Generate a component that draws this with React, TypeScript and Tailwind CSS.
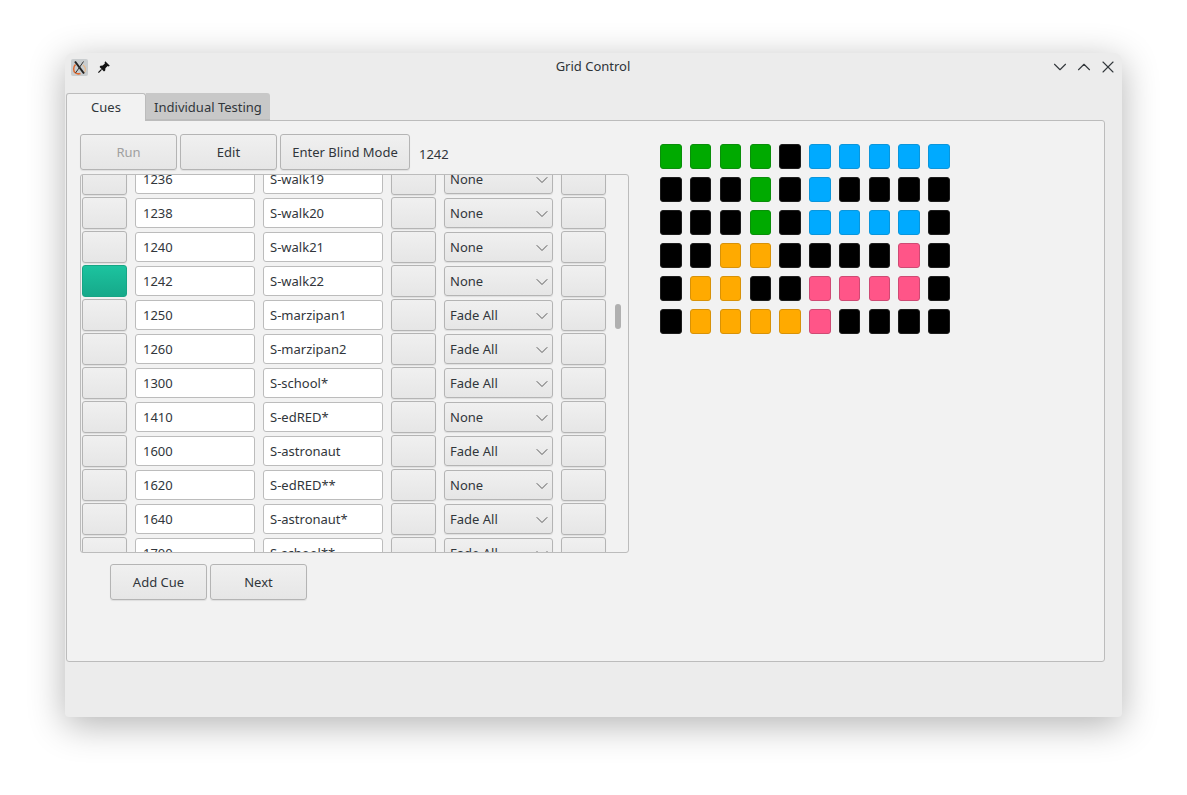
import { ChevronDown, ChevronUp, X } from "lucide-react";

// Cue rows of the table, top one is cut off by the scroll area
const ROWS: { id: string; name: string; fade: string; active?: boolean }[] = [
  { id: "1236", name: "S-walk19", fade: "None" },
  { id: "1238", name: "S-walk20", fade: "None" },
  { id: "1240", name: "S-walk21", fade: "None" },
  { id: "1242", name: "S-walk22", fade: "None", active: true },
  { id: "1250", name: "S-marzipan1", fade: "Fade All" },
  { id: "1260", name: "S-marzipan2", fade: "Fade All" },
  { id: "1300", name: "S-school*", fade: "Fade All" },
  { id: "1410", name: "S-edRED*", fade: "None" },
  { id: "1600", name: "S-astronaut", fade: "Fade All" },
  { id: "1620", name: "S-edRED**", fade: "None" },
  { id: "1640", name: "S-astronaut*", fade: "Fade All" },
  { id: "1700", name: "S-school**", fade: "Fade All" },
];

const GRID = [
  "GGGGKBBBBB",
  "KKKGKBKKKK",
  "KKKGKBBBBK",
  "KKOOKKKKPK",
  "KOOKKPPPPK",
  "KOOOOPKKKK",
];

const CELL: Record<string, string> = {
  G: "bg-[#00aa00] border-[#0a8f0a]",
  K: "bg-black border-[#1c1c1c]",
  B: "bg-[#00aaff] border-[#0a96dc]",
  O: "bg-[#ffaa00] border-[#d89208]",
  P: "bg-[#ff5588] border-[#cf4a74]",
};

const BTN =
  "rounded-[3px] border border-[#b4b4b4] bg-gradient-to-b from-[#f0f0f0] to-[#e6e6e6] shadow-[0_1px_1px_rgba(0,0,0,0.08)]";

function PushButton({ label, w, disabled }: { label: string; w: string; disabled?: boolean }) {
  return (
    <button
      className={`${BTN} ${w} h-9 pt-[2px] text-[13px] ${disabled ? "text-[#a0a0a0]" : "text-[#31363b]"}`}
    >
      {label}
    </button>
  );
}

function XLogo() {
  return (
    <div className="w-[17px] h-[17px] rounded-[2px] bg-[#c9cdcf]">
      <svg viewBox="0 0 17 17" className="w-[17px] h-[17px]">
        <path d="M4.5 5.5C2 8 2 12 4.5 14c1.5 1 3.5 1 5 .5" stroke="#e0672c" strokeWidth="1.5" fill="none" />
        <path d="M12 6c2.5 2 3 5 1.5 7.5" stroke="#e8b98c" strokeWidth="1.2" fill="none" />
        <path d="M4 2.5 13 14.5" stroke="#222" strokeWidth="2" fill="none" />
        <path d="M12.5 2.5 4.5 14" stroke="#333" strokeWidth="1" fill="none" />
      </svg>
    </div>
  );
}

// solid window-pin glyph, head up-right and point down-left
function PinIcon() {
  return (
    <svg viewBox="0 0 14 14" className="w-[14px] h-[14px]">
      <path d="M8.3 1.2 12.8 5.7 11.6 6.4 10.6 6.1 8.4 8.3 8.2 10.6 7 11.4 2.6 7 3.4 5.8 5.7 5.6 7.9 3.4 7.6 2.4z" fill="#111" />
      <path d="M4.6 9.4 1.4 12.6" stroke="#111" strokeWidth="1.2" />
    </svg>
  );
}

function CueRow({ id, name, fade, active }: (typeof ROWS)[number]) {
  return (
    <div className="flex items-center h-[34px] pl-px">
      <div
        className={`w-[45px] h-8 ${
          active
            ? "rounded-[3px] border border-[#17a585] bg-gradient-to-b from-[#1cc39f] to-[#16a98a]"
            : BTN
        }`}
      />
      <div className="ml-2 w-[120px] h-[30px] rounded-[3px] border border-[#bcbcbc] bg-white pl-[7px] leading-[28px]">
        {id}
      </div>
      <div className="ml-2 w-[120px] h-[30px] rounded-[3px] border border-[#bcbcbc] bg-white pl-[6px] leading-[28px]">
        {name}
      </div>
      <div className={`ml-2 w-[45px] h-8 ${BTN}`} />
      <div className={`ml-2 w-[109px] h-[30px] ${BTN} flex items-center justify-between pl-[5px] pt-[2px]`}>
        <span>{fade}</span>
        <ChevronDown className="w-5 h-5 text-[#4d4d4d]" strokeWidth={1.1} />
      </div>
      <div className={`ml-2 w-[45px] h-8 ${BTN}`} />
    </div>
  );
}

export default function App() {
  return (
    <div className="w-[1187px] h-[795px] bg-white pt-[53px] pl-[65px] overflow-hidden font-['Noto_Sans',sans-serif] text-[13px] text-[#31363b]">
      <div className="w-[1057px] h-[664px] rounded-t-lg rounded-b-sm bg-[#ececec] shadow-[0_8px_36px_rgba(0,0,0,0.3)] flex flex-col">
        <header className="h-10 shrink-0 flex items-center justify-between pl-[6px] pr-[2px]">
          <div className="flex items-center gap-[9px] w-16 -mt-[12px]">
            <XLogo />
            <PinIcon />
          </div>
          <div className="-mt-[12px] ml-[3px] text-[13px] text-[#2e3338]">Grid Control</div>
          <div className="flex items-center -mt-[12px] text-[#33383c]">
            <div className="w-6 h-6 flex items-center justify-center">
              <ChevronDown className="w-[22px] h-[22px]" strokeWidth={1.2} />
            </div>
            <div className="w-6 h-6 flex items-center justify-center">
              <ChevronUp className="w-[22px] h-[22px]" strokeWidth={1.2} />
            </div>
            <div className="w-6 h-6 flex items-center justify-center">
              <X className="w-5 h-5" strokeWidth={1.3} />
            </div>
          </div>
        </header>

        <div className="pl-px">
          <div className="flex h-[27px] relative z-10">
            <div className="w-[80px] h-[28px] rounded-t-[3px] border border-b-0 border-[#bcbcbc] bg-[#f2f2f2] text-center leading-[27px]">
              Cues
            </div>
            <div className="w-[124px] h-[27px] rounded-tr-[3px] bg-[#c8c8c8] text-center leading-[28px] border-b border-[#bcbcbc]">
              Individual Testing
            </div>
          </div>
          <div className="w-[1039px] h-[542px] rounded-b-[3px] rounded-tr-[3px] border border-[#bcbcbc] bg-[#f2f2f2] flex">
            <div className="pl-[13px] pt-[13px]">
              <div className="flex items-center h-9">
                <PushButton label="Run" w="w-[97px]" disabled />
                <PushButton label="Edit" w="w-[97px] ml-[3px]" />
                <PushButton label="Enter Blind Mode" w="w-[130px] ml-[3px]" />
                <span className="ml-[9px] mt-[5px]">1242</span>
              </div>
              <div className="mt-[4px] w-[549px] h-[379px] rounded-[3px] border border-[#bcbcbc] overflow-hidden relative">
                <div className="-mt-[13px]">
                  {ROWS.map((r) => (
                    <CueRow key={r.id} {...r} />
                  ))}
                </div>
                <div className="absolute left-[534px] top-[129px] w-[6px] h-[25px] rounded-[3px] bg-[#b0b0b0]" />
              </div>
              <div className="flex gap-[3px] ml-[30px] mt-[11px]">
                <PushButton label="Add Cue" w="w-[97px]" />
                <PushButton label="Next" w="w-[97px]" />
              </div>
            </div>
            <div className="ml-[31.3px] mt-[23px] grid grid-cols-[repeat(10,21.4px)] auto-rows-[25px] gap-x-[8.38px] gap-y-2 h-fit">
              {GRID.flatMap((row, y) =>
                row.split("").map((c, x) => (
                  <div key={`${y}-${x}`} className={`rounded-[3px] border ${CELL[c]}`} />
                )),
              )}
            </div>
          </div>
        </div>
      </div>
    </div>
  );
}
